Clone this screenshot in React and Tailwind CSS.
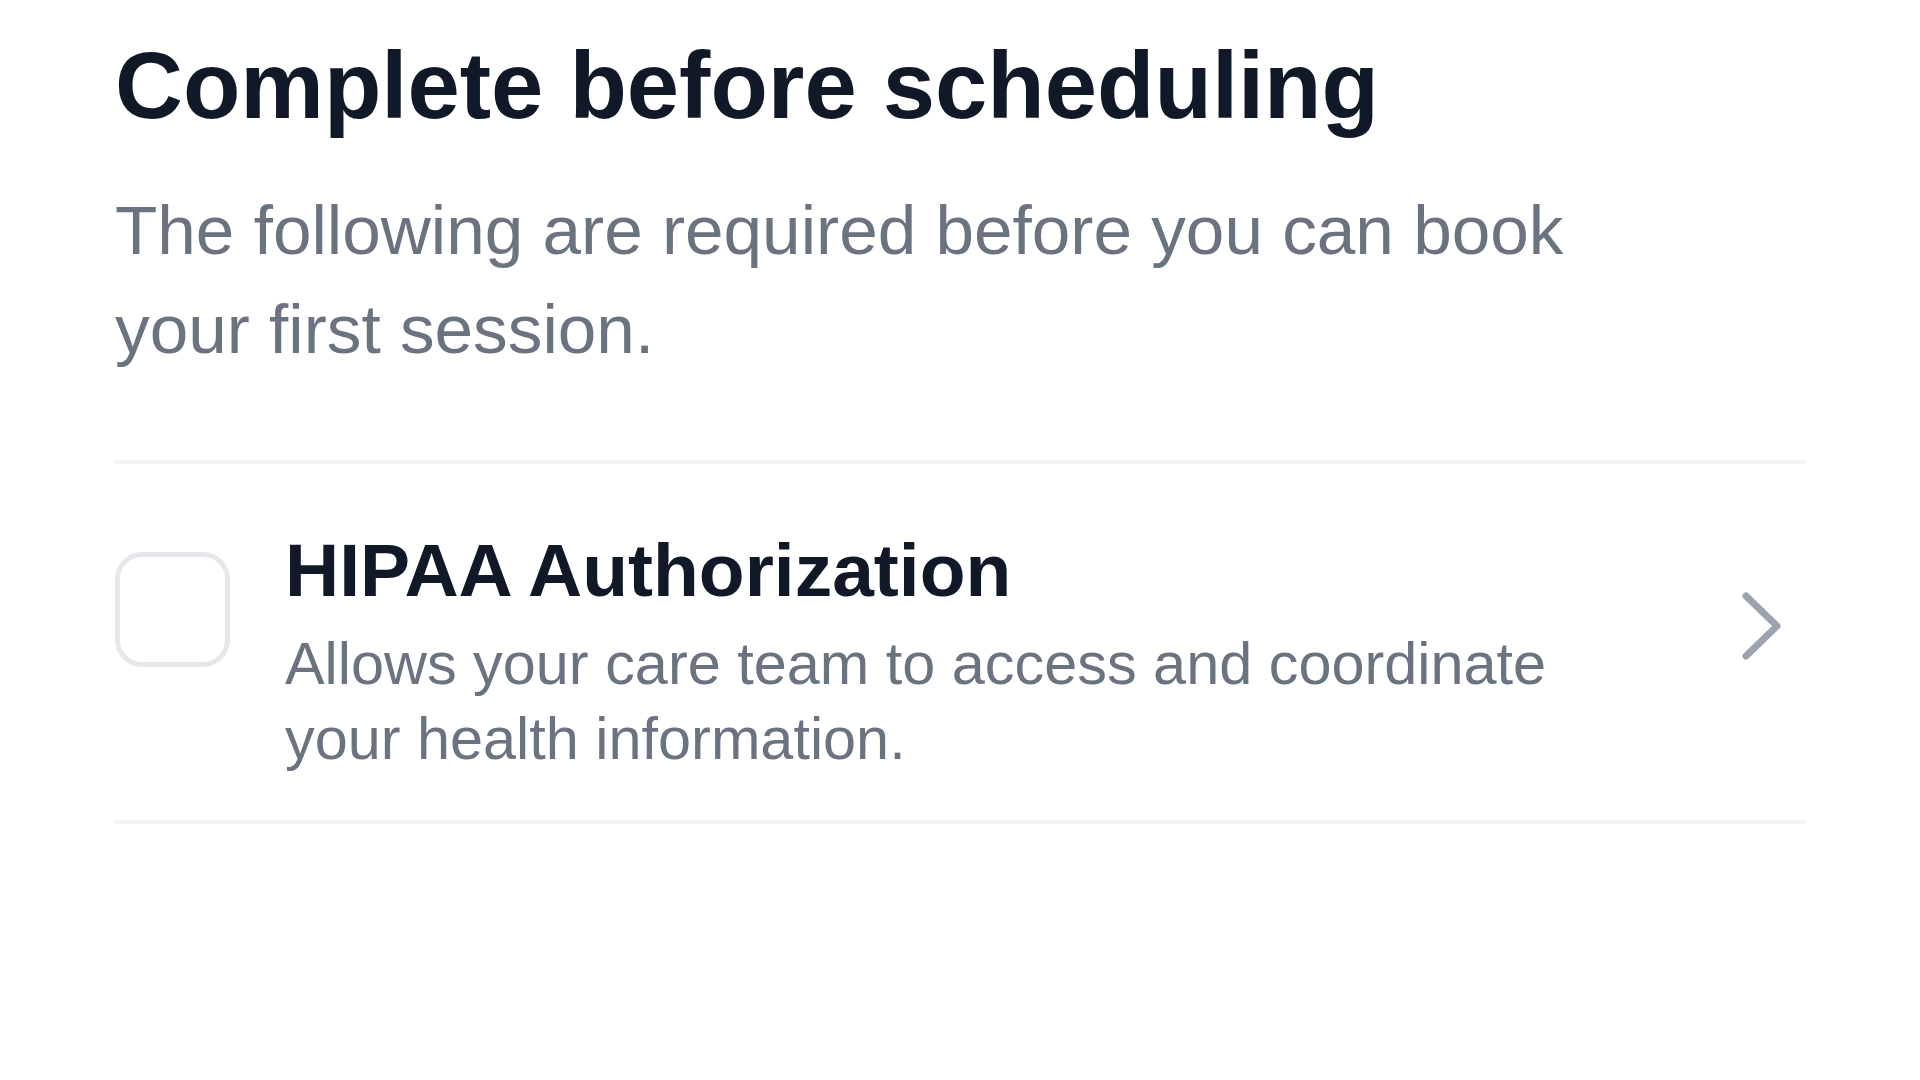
export default function App() {
  return (
    <div className="min-h-screen bg-white font-['Liberation_Sans',Arial,sans-serif]">
      <div className="px-[115px] pt-[27px]">
        <h1 className="text-[94px] leading-[117px] font-bold text-[#111827]">
          Complete before scheduling
        </h1>
        <p className="mt-[37px] max-w-[1500px] text-[69.3px] leading-[99px] text-[#6b7280]">
          The following are required before you can book your first session.
        </p>

        <div className="mt-[81px] border-y-4 border-[#f3f4f6]">
          <RequirementRow
            title="HIPAA Authorization"
            description="Allows your care team to access and coordinate your health information."
          />
        </div>
      </div>
    </div>
  )
}

function RequirementRow({ title, description }) {
  return (
    <div className="flex items-start pt-[62px] pb-[44px]">
      <div className="mt-[26px] h-[115px] w-[115px] shrink-0 rounded-[27px] border-[5px] border-[#e5e7eb]" />
      <div className="ml-[55px] max-w-[1300px]">
        <div className="text-[75px] leading-[89px] font-bold text-[#111827]">{title}</div>
        <div className="mt-[11px] text-[59.4px] leading-[75px] text-[#6b7280]">{description}</div>
      </div>
      <svg
        className="ml-auto mr-[23px] mt-[62px] shrink-0"
        width="44"
        height="76"
        viewBox="0 0 44 76"
        fill="none"
        stroke="#9ca3af"
        strokeWidth="7"
        strokeLinecap="round"
        strokeLinejoin="round"
      >
        <path d="M8 8 L39 38 L8 68" />
      </svg>
    </div>
  )
}
